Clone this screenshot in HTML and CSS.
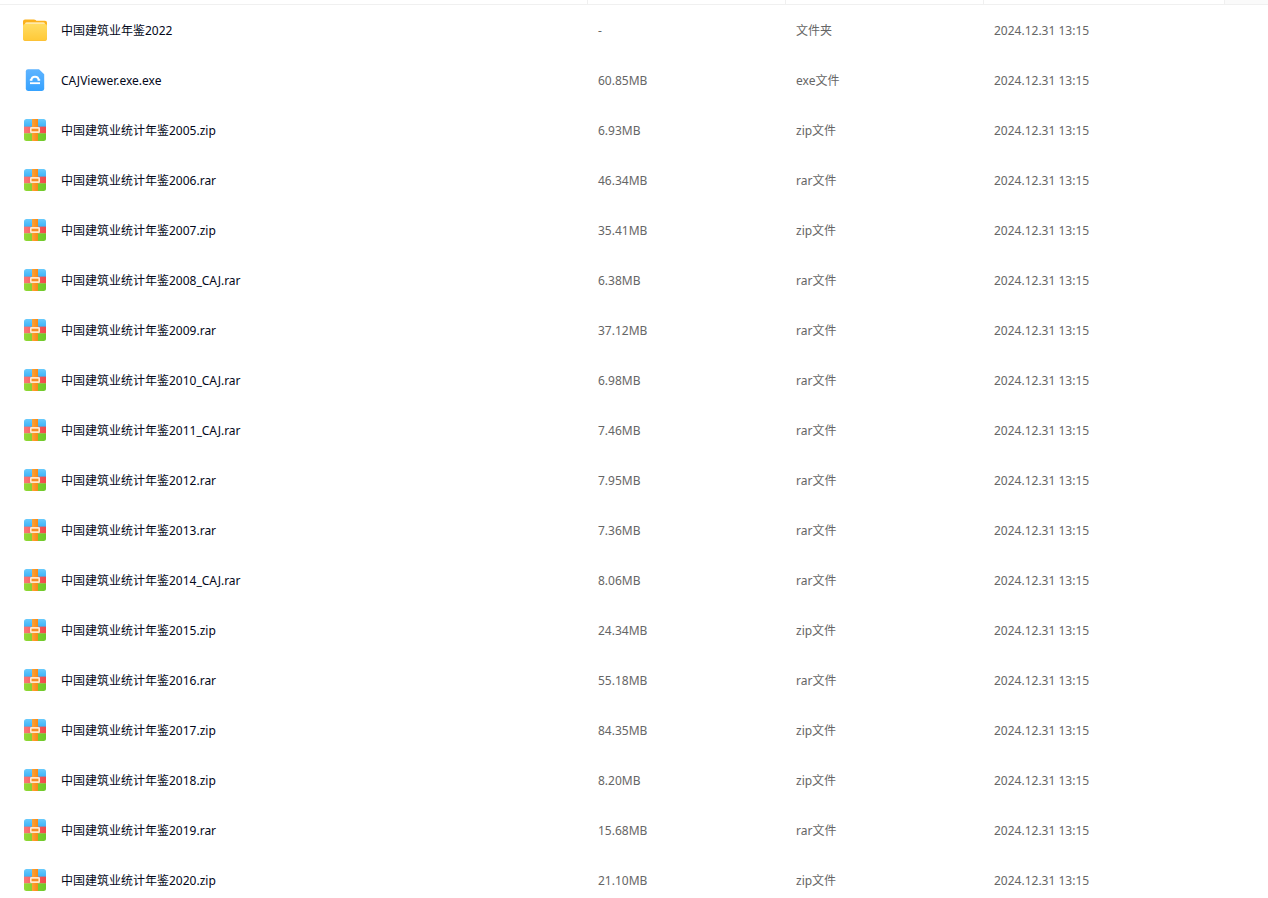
FILE: index.html
```html
<!DOCTYPE html>
<html lang="zh-CN">
<head>
    <meta charset="UTF-8">
    <meta name="viewport" content="width=device-width, initial-scale=1.0">
    <title>文件列表</title>

    <link rel="stylesheet" href="styles.css">
</head>
<body>
    <!-- icons -->
    <svg class="sprite" aria-hidden="true">
        <defs>
            <linearGradient id="folderFill" x1="0" y1="0" x2="0" y2="1">
                <stop offset="0" stop-color="#ffdc62"/>
                <stop offset="1" stop-color="#ffc937"/>
            </linearGradient>
            <linearGradient id="exeFill" x1="0" y1="0" x2="0" y2="1">
                <stop offset="0" stop-color="#5fb4ff"/>
                <stop offset="1" stop-color="#36a2ff"/>
            </linearGradient>
            <linearGradient id="zipTop" x1="0" y1="0" x2="0" y2="1">
                <stop offset="0" stop-color="#6acbfc"/>
                <stop offset="1" stop-color="#3cb3f8"/>
            </linearGradient>
            <linearGradient id="zipMid" x1="0" y1="0" x2="1" y2="0">
                <stop offset="0" stop-color="#fb7676"/>
                <stop offset="1" stop-color="#f04848"/>
            </linearGradient>
            <linearGradient id="zipLow" x1="0" y1="0" x2="1" y2="0">
                <stop offset="0" stop-color="#93d936"/>
                <stop offset="1" stop-color="#6cc82a"/>
            </linearGradient>
            <linearGradient id="zipBelt" x1="0" y1="0" x2="1" y2="0">
                <stop offset="0" stop-color="#ffa235"/>
                <stop offset="1" stop-color="#f78a16"/>
            </linearGradient>
            <clipPath id="zipBox"><rect x="1" y="1" width="22" height="22" rx="2.5"/></clipPath>
        </defs>
        <symbol id="folder" viewBox="0 0 24 24">
            <path d="M0 3.5Q0 1.5 2 1.5H11Q12 1.5 12.6 2.1L13.4 2.7H22Q24 2.7 24 4.7V12H0Z" fill="#fbb11d"/>
            <path d="M2 6Q2 4.3 3.5 4.3H20.5Q22 4.3 22 6V9H2Z" fill="#ffe9a8"/>
            <path d="M0 8Q0 6 2 6H22Q24 6 24 8V21Q24 22.8 22 22.8H2Q0 22.8 0 21Z" fill="url(#folderFill)"/>
            <path d="M.5 21.8Q1 22.5 2 22.5H22Q23 22.5 23.5 21.8" fill="none" stroke="#fbbc2b" stroke-width=".8"/>
        </symbol>
        <symbol id="exe" viewBox="0 0 24 24">
            <path d="M5 1.2H16L21.2 6.2V20.8Q21.2 22.9 19 22.9H5Q2.8 22.9 2.8 20.8V3.4Q2.8 1.2 5 1.2Z" fill="url(#exeFill)"/>
            <path d="M8.2 12.2Q8.6 8.7 12 8.7Q15.4 8.7 15.8 12.2" fill="none" stroke="#fff" stroke-width="1.9"/>
            <path d="M6.8 12H9.4M14.6 12H17.2" stroke="#fff" stroke-width="1.4"/>
            <path d="M7 15.2H17" stroke="#fff" stroke-width="1.8"/>
        </symbol>
        <symbol id="archive" viewBox="0 0 24 24">
            <g clip-path="url(#zipBox)">
                <rect x="1" y="1" width="22" height="8" fill="url(#zipTop)"/>
                <rect x="1" y="8.6" width="22" height="7" fill="url(#zipMid)"/>
                <rect x="1" y="15.3" width="22" height="8" fill="url(#zipLow)"/>
                <rect x="9" y="1" width="6" height="22" fill="url(#zipBelt)"/>
            </g>
            <rect x="7.8" y="9.9" width="8.4" height="4.2" rx=".4" fill="#f98d26" stroke="#ffe9cd" stroke-width="1.6"/>
        </symbol>
    </svg>

    <div class="filePanel">
        <table class="fileTable">
            <thead>
                <tr>
                    <th class="colName" aria-label="文件名"></th>
                    <th class="colSize" aria-label="大小"></th>
                    <th class="colType" aria-label="类型"></th>
                    <th class="colDate" aria-label="修改时间"></th>
                    <th class="colMore"></th>
                </tr>
            </thead>
            <tbody class="fileList"></tbody>
        </table>
    </div>

    <script>
        var fileList = document.querySelector(".fileList");

        // 名称, 大小, 图标
        var files = [
            ["中国建筑业年鉴2022", "-", "folder"],
            ["CAJViewer.exe.exe", "60.85MB", "exe"],
            ["中国建筑业统计年鉴2005.zip", "6.93MB", "archive"],
            ["中国建筑业统计年鉴2006.rar", "46.34MB", "archive"],
            ["中国建筑业统计年鉴2007.zip", "35.41MB", "archive"],
            ["中国建筑业统计年鉴2008_CAJ.rar", "6.38MB", "archive"],
            ["中国建筑业统计年鉴2009.rar", "37.12MB", "archive"],
            ["中国建筑业统计年鉴2010_CAJ.rar", "6.98MB", "archive"],
            ["中国建筑业统计年鉴2011_CAJ.rar", "7.46MB", "archive"],
            ["中国建筑业统计年鉴2012.rar", "7.95MB", "archive"],
            ["中国建筑业统计年鉴2013.rar", "7.36MB", "archive"],
            ["中国建筑业统计年鉴2014_CAJ.rar", "8.06MB", "archive"],
            ["中国建筑业统计年鉴2015.zip", "24.34MB", "archive"],
            ["中国建筑业统计年鉴2016.rar", "55.18MB", "archive"],
            ["中国建筑业统计年鉴2017.zip", "84.35MB", "archive"],
            ["中国建筑业统计年鉴2018.zip", "8.20MB", "archive"],
            ["中国建筑业统计年鉴2019.rar", "15.68MB", "archive"],
            ["中国建筑业统计年鉴2020.zip", "21.10MB", "archive"]
        ];

        var str = "";
        for (var i = 0; i < files.length; i++) {
            var name = files[i][0];
            var icon = files[i][2];
            var type = icon == "folder" ? "文件夹" : name.split(".").pop() + "文件";

            str += '<tr>';
                str += '<td><a class="file" href="#">';
                    str += '<svg class="icon" aria-hidden="true"><use href="#' + icon + '"></use></svg>';
                    str += '<span class="fileName">' + name + '</span>';
                str += '</a></td>';
                str += '<td>' + files[i][1] + '</td>';
                str += '<td>' + type + '</td>';
                str += '<td colspan="2">2024.12.31 13:15</td>';
            str += '</tr>';
        }
        fileList.innerHTML = str;
    </script>
</body>
</html>
```
FILE: styles.css
```css
body {
    margin: 0;
    background-color: #fff;
    color: #666;
    font-family: "Noto Sans", "Noto Sans CJK SC", sans-serif;
    font-size: 12px;
    line-height: 20px;
}

.sprite {
    display: block;
    width: 0;
    height: 0;
}

.filePanel {
    height: 100vh;
    overflow: auto;
    scrollbar-width: none;
}

.fileTable {
    width: 100%;
    table-layout: fixed;
    border-collapse: separate;
    border-spacing: 0;
}

.fileTable th {
    box-sizing: border-box;
    height: 5px;
    padding: 0;
    border-right: 1px solid #f0f0f0;
    border-bottom: 1px solid #f0f0f0;
}

.colSize,
.colType {
    width: 198px;
}

.colDate {
    width: 241px;
}

.fileTable .colMore {
    width: 43px;
    border-right: 0;
    background-color: #fafafa;
}

.fileTable td {
    box-sizing: border-box;
    height: 50px;
    padding: 2px 10px 0;
    white-space: nowrap;
}

.fileTable td:first-child {
    padding: 0 10px 0 23px;
}

.file {
    display: flex;
    align-items: center;
    gap: 14px;
    color: #03081a;
    text-decoration: none;
}

.fileName {
    padding-top: 2px;
}

.icon {
    flex: none;
    width: 24px;
    height: 24px;
}
```
